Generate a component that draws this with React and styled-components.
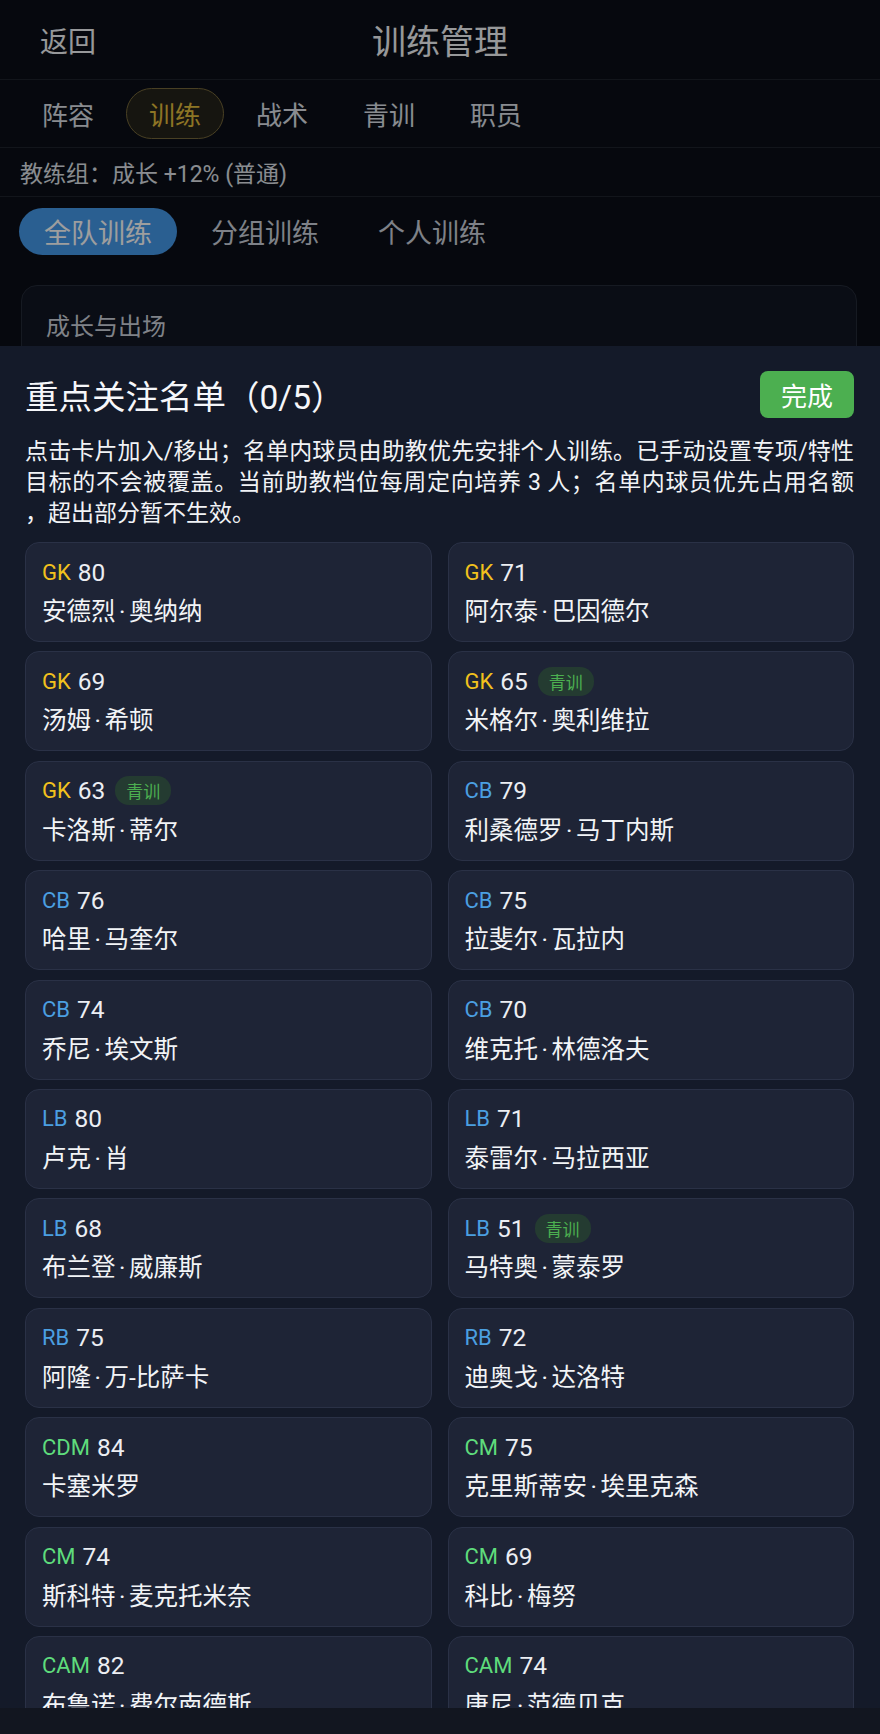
import styled, { createGlobalStyle } from "styled-components";

const FONT = `Roboto, "Noto Sans CJK SC", "Noto Sans", sans-serif`;

const GlobalStyle = createGlobalStyle`
  * { box-sizing: border-box; }
  html, body { margin: 0; padding: 0; background: #0b0e17; }
  body {
    font-family: ${FONT};
    -webkit-font-smoothing: antialiased;
    overflow: hidden;
  }
`;

const TABS = ["阵容", "训练", "战术", "青训", "职员"];
const MODES = ["全队训练", "分组训练", "个人训练"];

const POS_COLORS = {
  gk: "#f2c11d",
  def: "#4b9fe1",
  mid: "#5edc7c",
};

const PLAYERS = [
  { pos: "GK", group: "gk", ovr: 80, name: "安德烈·奥纳纳" },
  { pos: "GK", group: "gk", ovr: 71, name: "阿尔泰·巴因德尔" },
  { pos: "GK", group: "gk", ovr: 69, name: "汤姆·希顿" },
  { pos: "GK", group: "gk", ovr: 65, name: "米格尔·奥利维拉", youth: true },
  { pos: "GK", group: "gk", ovr: 63, name: "卡洛斯·蒂尔", youth: true },
  { pos: "CB", group: "def", ovr: 79, name: "利桑德罗·马丁内斯" },
  { pos: "CB", group: "def", ovr: 76, name: "哈里·马奎尔" },
  { pos: "CB", group: "def", ovr: 75, name: "拉斐尔·瓦拉内" },
  { pos: "CB", group: "def", ovr: 74, name: "乔尼·埃文斯" },
  { pos: "CB", group: "def", ovr: 70, name: "维克托·林德洛夫" },
  { pos: "LB", group: "def", ovr: 80, name: "卢克·肖" },
  { pos: "LB", group: "def", ovr: 71, name: "泰雷尔·马拉西亚" },
  { pos: "LB", group: "def", ovr: 68, name: "布兰登·威廉斯" },
  { pos: "LB", group: "def", ovr: 51, name: "马特奥·蒙泰罗", youth: true },
  { pos: "RB", group: "def", ovr: 75, name: "阿隆·万-比萨卡" },
  { pos: "RB", group: "def", ovr: 72, name: "迪奥戈·达洛特" },
  { pos: "CDM", group: "mid", ovr: 84, name: "卡塞米罗" },
  { pos: "CM", group: "mid", ovr: 75, name: "克里斯蒂安·埃里克森" },
  { pos: "CM", group: "mid", ovr: 74, name: "斯科特·麦克托米奈" },
  { pos: "CM", group: "mid", ovr: 69, name: "科比·梅努" },
  { pos: "CAM", group: "mid", ovr: 82, name: "布鲁诺·费尔南德斯" },
  { pos: "CAM", group: "mid", ovr: 74, name: "唐尼·范德贝克" },
];

const HINT_LINES = [
  "点击卡片加入/移出；名单内球员由助教优先安排个人训练。已手动设置专项/特性",
  "目标的不会被覆盖。当前助教档位每周定向培养 3 人；名单内球员优先占用名额",
  "，超出部分暂不生效。",
];

// split "名·姓" so the middle dot gets its own spacing
function renderName(name) {
  const parts = name.split("·");
  return parts.map((part, i) => (
    <span key={i}>
      {i > 0 && <NameDot>·</NameDot>}
      {part}
    </span>
  ));
}

export default function App() {
  return (
    <>
      <GlobalStyle />
      <Screen>
        <TopBar>
          <BackButton>返回</BackButton>
          <PageTitle>训练管理</PageTitle>
          <span />
        </TopBar>

        <TabBar>
          {TABS.map((t) => (
            <Tab key={t} $active={t === "训练"}>{t}</Tab>
          ))}
        </TabBar>

        <CoachLine>教练组：成长 +12% (普通)</CoachLine>

        <ModeBar>
          {MODES.map((m) => (
            <ModePill key={m} $active={m === "全队训练"}>{m}</ModePill>
          ))}
        </ModeBar>

        <Section>
          <SectionTitle>成长与出场</SectionTitle>
        </Section>
      </Screen>

      <Backdrop />

      {/* focus list sheet */}
      <Sheet>
        <SheetHeader>
          <SheetTitle>重点关注名单（0/5）</SheetTitle>
          <DoneButton>完成</DoneButton>
        </SheetHeader>

        {/* justified paragraph, last line left as is */}
        <Hint>
          {HINT_LINES.map((line, i) => (
            <HintLine key={i} $justify={i < HINT_LINES.length - 1}>
              {line}
            </HintLine>
          ))}
        </Hint>

        <ListViewport>
          <PlayerGrid>
            {PLAYERS.map((p) => (
              <PlayerCard key={p.name}>
                <MetaRow>
                  <Pos $group={p.group}>{p.pos}</Pos>
                  <Rating>{p.ovr}</Rating>
                  {p.youth && <YouthTag>青训</YouthTag>}
                </MetaRow>
                <PlayerName>{renderName(p.name)}</PlayerName>
              </PlayerCard>
            ))}
          </PlayerGrid>
        </ListViewport>

        <SheetFooter />
      </Sheet>
    </>
  );
}

/* ── underlying page ── */
const Screen = styled.div`
  width: 880px;
  height: 1734px;
  background: #0b0e17;
  color: #f4f6f9;
`;

const TopBar = styled.header`
  display: grid;
  grid-template-columns: 1fr auto 1fr;
  align-items: center;
  height: 80px;
  padding: 0 40px;
  border-bottom: 1px solid #1d222d;
`;

const BackButton = styled.div`
  font-size: 28px;
  color: #f4f6f9;
`;

const PageTitle = styled.h1`
  margin: 0;
  font-size: 34px;
  font-weight: 400;
  color: #f4f6f9;
`;

const TabBar = styled.nav`
  display: flex;
  align-items: center;
  gap: 9px;
  height: 68px;
  padding: 0 19px;
  border-bottom: 1px solid #1d222d;
`;

const Tab = styled.div`
  display: flex;
  align-items: center;
  height: 51px;
  padding: 0 22px;
  border-radius: 26px;
  border: 1.5px solid ${({ $active }) => ($active ? "#76683a" : "transparent")};
  background: ${({ $active }) => ($active ? "#24221a" : "transparent")};
  color: ${({ $active }) => ($active ? "#e3bd3c" : "#dde1e8")};
  font-size: 26px;
`;

const CoachLine = styled.div`
  display: flex;
  align-items: center;
  height: 49px;
  padding: 0 20px;
  font-size: 23px;
  color: #dfe2e8;
  border-bottom: 1px solid #1d222d;
`;

const ModeBar = styled.div`
  display: flex;
  gap: 9px;
  padding: 11px 19px 0;
`;

const ModePill = styled.div`
  display: flex;
  align-items: center;
  height: 47px;
  padding: 0 25px;
  border-radius: 24px;
  background: ${({ $active }) => ($active ? "#4599ea" : "transparent")};
  color: ${({ $active }) => ($active ? "#ffffff" : "#cbd1db")};
  font-size: 27px;
`;

const Section = styled.section`
  margin: 30px 23px 0 21px;
  height: 300px;
  padding: 24px;
  border: 1px solid #242a38;
  border-radius: 16px;
  background: #111622;
`;

const SectionTitle = styled.h2`
  margin: 0;
  font-size: 24px;
  font-weight: 400;
  line-height: 34px;
  color: #cdd2db;
`;

const Backdrop = styled.div`
  position: fixed;
  inset: 0;
  background: rgba(0, 0, 0, 0.38);
`;

/* ── sheet ── */
const Sheet = styled.div`
  position: fixed;
  top: 346px;
  left: 0;
  right: 0;
  bottom: 0;
  display: flex;
  flex-direction: column;
  padding: 25px 26px 0 25px;
  background: #141a29;
  color: #f4f6f9;
`;

const SheetHeader = styled.div`
  display: flex;
  justify-content: space-between;
  align-items: center;
  height: 47px;
`;

const SheetTitle = styled.h2`
  margin: 0;
  font-size: 33.5px;
  font-weight: 400;
  color: #f6f7fa;
`;

const DoneButton = styled.button`
  height: 47px;
  padding: 0 21px;
  border: none;
  border-radius: 8px;
  background: #4caf50;
  color: #ffffff;
  font-family: ${FONT};
  font-size: 26px;
`;

const Hint = styled.div`
  margin-top: 17.5px;
  font-size: 23px;
  line-height: 31px;
  color: #f1f3f6;
`;

const HintLine = styled.div`
  text-align: justify;
  text-align-last: ${({ $justify }) => ($justify ? "justify" : "start")};
`;

const ListViewport = styled.div`
  flex: 1;
  min-height: 0;
  margin-top: 13.5px;
  overflow: hidden;
`;

const PlayerGrid = styled.div`
  display: grid;
  grid-template-columns: 1fr 1fr;
  column-gap: 16px;
  row-gap: 9.4px;
`;

const PlayerCard = styled.div`
  display: flex;
  flex-direction: column;
  gap: 6px;
  height: 100px;
  padding: 12px 16px;
  border: 1px solid #2a3146;
  border-radius: 14px;
  background: #1e2436;
`;

const MetaRow = styled.div`
  display: flex;
  align-items: center;
  gap: 7px;
  height: 34px;
`;

const Pos = styled.span`
  font-size: 22px;
  color: ${({ $group }) => POS_COLORS[$group]};
`;

const Rating = styled.span`
  font-size: 24.5px;
  color: #eceef3;
`;

const YouthTag = styled.span`
  display: inline-flex;
  align-items: center;
  height: 29px;
  margin-left: 3px;
  padding: 0 11px;
  border-radius: 14px;
  background: #243b31;
  color: #4caf50;
  font-size: 17px;
`;

const PlayerName = styled.div`
  height: 34px;
  line-height: 34px;
  font-size: 24.5px;
  color: #f2f4f7;
  white-space: nowrap;
`;

const NameDot = styled.span`
  margin: 0 3.5px;
`;

const SheetFooter = styled.div`
  height: 26px;
  margin: 0 -26px 0 -25px;
  background: #121620;
`;
